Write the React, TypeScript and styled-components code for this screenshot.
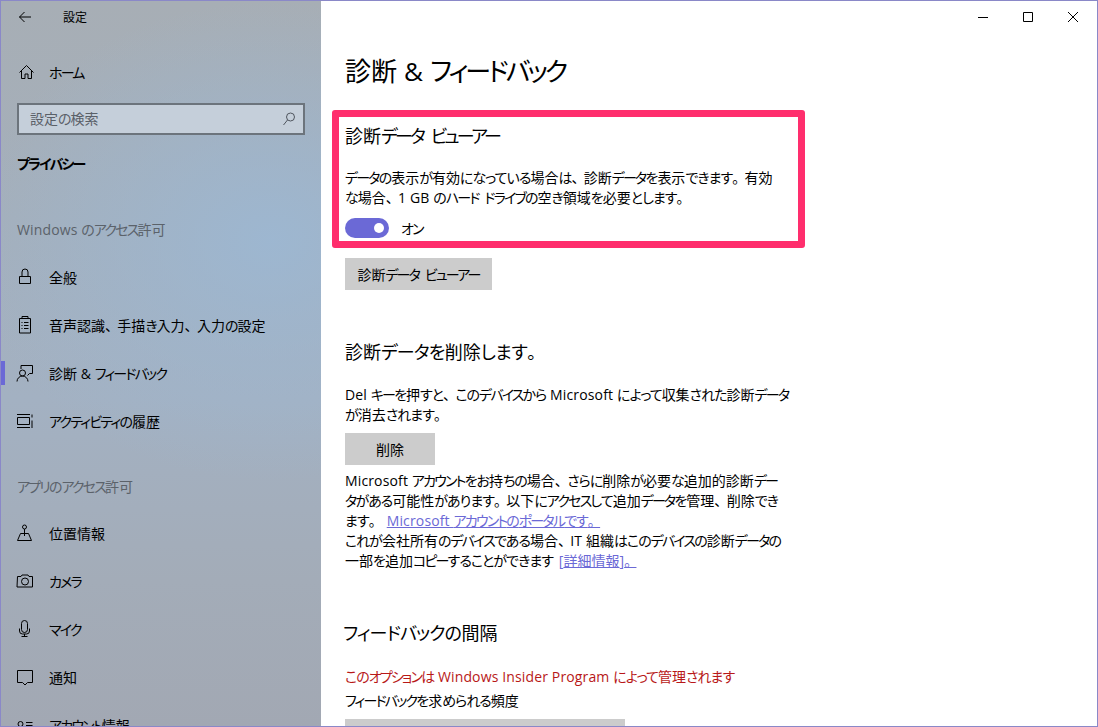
import React from 'react';
import styled, { createGlobalStyle } from 'styled-components';

const accent = '#6b69d6';

const GlobalStyle = createGlobalStyle`
    html, body {
        margin: 0;
        padding: 0;
        background: #fff;
    }
    body {
        font-family: 'Open Sans', 'Noto Sans CJK JP', sans-serif;
        font-feature-settings: 'palt';
        color: #000;
    }
`;

type RunKind = 'hira' | 'kata' | 'punct' | 'kanji' | 'gap' | 'latin';

const kindOf = (run: string): RunKind => {
    if (run === ' ') return 'gap';
    if (/^[ぁ-ん]/.test(run)) return 'hira';
    if (/^[ァ-ヶー]/.test(run)) return 'kata';
    if (/^[、。]/.test(run)) return 'punct';
    if (/^[\u4e00-\u9fff]/.test(run)) return 'kanji';
    return 'latin';
};

const Jp: React.FC<{ text: string }> = ({ text }) => (
    <>
        {(text.match(/[ぁ-ん]+|[ァ-ヶー]+|[、。]+|[\u4e00-\u9fff]+|[^ぁ-んァ-ヶー、。\u4e00-\u9fff]+/g) ?? []).map((run, i) => (
            <Run key={i} $kind={kindOf(run)}>
                {run}
            </Run>
        ))}
    </>
);

const Icon: React.FC<{ children: React.ReactNode }> = ({ children }) => (
    <svg width="22" height="22" viewBox="0 0 22 22" fill="none" stroke="#000" strokeWidth="1">
        {children}
    </svg>
);

const navIcons: Record<string, React.ReactNode> = {
    home: <path d="M5.500 11.500 12.500 4.500l7 7M7.500 9.500v8h3.500V13h3v4.500h3.500v-8" />,
    lock: <path d="M5.500 10.500h11v7h-11zM8 10.500V6a3 3 0 0 1 6 0v4.500" />,
    speech: (
        <path d="M5.500 4.500h11v14.500h-11zM8 4.500v-2h6v2M7.500 8.500h1M7.500 11.500h1M7.500 14.500h1M10 8.500h4.500M10 11.500h4.500M10 14.500h4.500" />
    ),
    feedback: (
        <>
            <circle cx="8.500" cy="11" r="3" />
            <path d="M3 19.500c0-3 2.500-5.500 5.500-5.500s5.500 2.500 5.500 5.500M7 7V3.500h11.500v8h-3l-2 2" />
        </>
    ),
    activity: <path d="M3 4.500h13M3 17.500h13M3.500 7.500h12v7h-12zM18 10.500v7.500M18 4.500v3" />,
    location: (
        <>
            <circle cx="10.500" cy="5" r="2" />
            <path d="M10.500 7v7M6.500 11.500h8l3 7h-14z" />
        </>
    ),
    camera: (
        <>
            <path d="M3.500 6.500h3.500l1-1.500h6l1 1.500h3.500v10.500h-15.500z" />
            <circle cx="11" cy="11.500" r="3.500" />
        </>
    ),
    mic: (
        <>
            <rect x="7.500" y="2.500" width="6" height="12" rx="3" />
            <path d="M5.500 10.500v2.500a3 3 0 0 0 3 3h4a3 3 0 0 0 3-3v-2.500M10.500 16v2.500M7.500 18.500h6" />
        </>
    ),
    notice: <path d="M3.500 4.500h15v12h-5l-2.500 2.500-2.500-2.500h-5z" />,
    account: (
        <>
            <circle cx="6.500" cy="10" r="2.500" />
            <path d="M2.500 18c0-3 2-4.500 4-4.500s4 1.500 4 4.500M12 8.500h6.500M12 11.500h6.500" />
        </>
    ),
};

const NavItem: React.FC<{ icon: string; label: string; active?: boolean }> = ({ icon, label, active }) => (
    <Item $active={active}>
        <IconSlot>
            <Icon>{navIcons[icon]}</Icon>
        </IconSlot>
        <span>
            <Jp text={label} />
        </span>
    </Item>
);

export default function App() {
    return (
        <>
            <GlobalStyle />
            <Window>
                <Sidebar>
                    <BackRow>
                        <svg width="16" height="16" viewBox="0 0 16 16" fill="none" stroke="#000" strokeWidth="1">
                            <path d="M1.500 8h11.500M6.500 3 1.500 8l5 5" />
                        </svg>
                        <span>設定</span>
                    </BackRow>
                    <HomeSlot>
                        <NavItem icon="home" label="ホーム" />
                    </HomeSlot>
                    <SearchBox>
                        <span>
                            <Jp text="設定の検索" />
                        </span>
                        <svg width="16" height="16" viewBox="0 0 16 16" fill="none" stroke="#50565e" strokeWidth="1">
                            <circle cx="10.500" cy="7" r="4" />
                            <path d="M7.500 10 3.500 15" />
                        </svg>
                    </SearchBox>
                    <SectionName>
                        <Jp text="プライバシー" />
                    </SectionName>
                    <GroupLabel $top={44} $bottom={12}>
                        <Jp text="Windows のアクセス許可" />
                    </GroupLabel>
                    <NavItem icon="lock" label="全般" />
                    <NavItem icon="speech" label="音声認識、手描き入力、入力の設定" />
                    <NavItem icon="feedback" label="診断 & フィードバック" active />
                    <NavItem icon="activity" label="アクティビティの履歴" />
                    <GroupLabel $top={31} $bottom={11}>
                        <Jp text="アプリのアクセス許可" />
                    </GroupLabel>
                    <NavItem icon="location" label="位置情報" />
                    <NavItem icon="camera" label="カメラ" />
                    <NavItem icon="mic" label="マイク" />
                    <NavItem icon="notice" label="通知" />
                    <NavItem icon="account" label="アカウント情報" />
                </Sidebar>
                <Main>
                    <TitleBar>
                        <WindowButton>
                            <svg width="12" height="12" viewBox="0 0 12 12" stroke="#000" fill="none">
                                <path d="M1 6.500h10" />
                            </svg>
                        </WindowButton>
                        <WindowButton>
                            <svg width="12" height="12" viewBox="0 0 12 12" stroke="#000" fill="none">
                                <path d="M1.500 1.500h9v9h-9z" />
                            </svg>
                        </WindowButton>
                        <WindowButton>
                            <svg width="12" height="12" viewBox="0 0 12 12" stroke="#000" fill="none">
                                <path d="M1 1l10 10M11 1 1 11" />
                            </svg>
                        </WindowButton>
                    </TitleBar>
                    <Content>
                        <PageTitle>
                            <Jp text="診断 & フィードバック" />
                        </PageTitle>
                        <Highlight>
                            <SubTitle $tight>
                                <Jp text="診断データ ビューアー" />
                            </SubTitle>
                            <Body $top={19}>
                                <Jp text="データの表示が有効になっている場合は、診断データを表示できます。有効" />
                                <br />
                                <Jp text="な場合、1 GB のハード ドライブの空き領域を必要とします。" />
                            </Body>
                            <ToggleRow>
                                <Toggle />
                                <span>
                                    <Jp text="オン" />
                                </span>
                            </ToggleRow>
                        </Highlight>
                        <GrayButton $width={147} $top={10}>
                            <span>
                                <Jp text="診断データ ビューアー" />
                            </span>
                        </GrayButton>
                        <SubTitle $top={49}>
                            <Jp text="診断データを削除します。" />
                        </SubTitle>
                        <Body $top={20}>
                            <Jp text="Del キーを押すと、このデバイスから Microsoft によって収集された診断データ" />
                            <br />
                            <Jp text="が消去されます。" />
                        </Body>
                        <GrayButton $width={90} $top={8}>
                            <span>
                                <Jp text="削除" />
                            </span>
                        </GrayButton>
                        <Body $top={6}>
                            <Jp text="Microsoft アカウントをお持ちの場合、さらに削除が必要な追加的診断デー" />
                            <br />
                            <Jp text="タがある可能性があります。以下にアクセスして追加データを管理、削除でき" />
                            <br />
                            <Jp text="ます。 " />
                            <TextLink>
                                <Jp text="Microsoft アカウントのポータルです。" />
                            </TextLink>
                            <br />
                            <Jp text="これが会社所有のデバイスである場合、IT 組織はこのデバイスの診断データの" />
                            <br />
                            <Jp text="一部を追加コピーすることができます " />
                            <TextLink>
                                <Jp text="[詳細情報]。" />
                            </TextLink>
                        </Body>
                        <SubTitle $top={49} $shift={-2}>
                            <Jp text="フィードバックの間隔" />
                        </SubTitle>
                        <Body $top={21} $color="#b81818">
                            <Jp text="このオプションは Windows Insider Program によって管理されます" />
                        </Body>
                        <Body $top={4}>
                            <Jp text="フィードバックを求められる頻度" />
                        </Body>
                        <SelectBar />
                    </Content>
                </Main>
            </Window>
        </>
    );
}

const tracking: Record<RunKind, string> = {
    hira: 'var(--hira, -0.07em)',
    kata: 'var(--kata, -0.13em)',
    punct: '-0.12em',
    kanji: '0',
    gap: '0.15em',
    latin: '0.01em',
};

const Run = styled.span<{ $kind: RunKind }>`
    letter-spacing: ${({ $kind }) => tracking[$kind]};
    font-feature-settings: ${({ $kind }) => ($kind === 'punct' ? 'normal' : "'palt'")};
`;

const Window = styled.div`
    display: flex;
    box-sizing: border-box;
    width: 1098px;
    height: 727px;
    overflow: hidden;
    border: 1px solid #8a88c8;
    background: #fff;
`;

const Sidebar = styled.aside`
    flex: 0 0 320px;
    display: flex;
    flex-direction: column;
    height: 725px;
    overflow: hidden;
    background:
        radial-gradient(ellipse 300px 240px at 270px 240px, rgba(156, 184, 212, 0.85), rgba(156, 184, 212, 0) 100%),
        linear-gradient(180deg, #a7aeb5 0%, #a4afbb 30%, #a3b1c2 55%, #a3acb8 80%, #a2a8b3 100%);
`;

const BackRow = styled.div`
    display: flex;
    align-items: center;
    flex: none;
    height: 32px;
    padding-left: 17px;
    font-size: 12px;

    span {
        margin-left: 29px;
    }
`;

const HomeSlot = styled.div`
    flex: none;
    margin-top: 15px;
`;

const Item = styled.div<{ $active?: boolean }>`
    position: relative;
    display: flex;
    align-items: center;
    flex: none;
    height: 48px;
    font-size: 14px;

    &::before {
        content: '';
        display: ${({ $active }) => ($active ? 'block' : 'none')};
        position: absolute;
        left: 0;
        top: 12px;
        width: 4px;
        height: 24px;
        background: ${accent};
    }
`;

const IconSlot = styled.span`
    display: flex;
    align-items: center;
    justify-content: center;
    width: 48px;
    height: 22px;
`;

const SearchBox = styled.div`
    display: flex;
    align-items: center;
    justify-content: space-between;
    box-sizing: border-box;
    flex: none;
    width: 288px;
    height: 32px;
    margin: 7px 0 0 16px;
    padding: 0 7px 2px 11px;
    border: 2px solid #6c747c;
    background: #c5cfda;
    color: #5a6068;
    font-size: 14px;
`;

const SectionName = styled.div`
    flex: none;
    margin: 18px 0 0 16px;
    line-height: 22px;
    font-size: 14px;
    font-weight: 700;
`;

const GroupLabel = styled.div<{ $top: number; $bottom: number }>`
    flex: none;
    margin: ${({ $top }) => $top}px 0 ${({ $bottom }) => $bottom}px 16px;
    line-height: 22px;
    font-size: 14px;
    color: #5b626a;
`;

const Main = styled.main`
    flex: 1;
    min-width: 0;
`;

const TitleBar = styled.div`
    display: flex;
    justify-content: flex-end;
    height: 32px;
    padding-right: 2px;
`;

const WindowButton = styled.div`
    display: flex;
    align-items: center;
    justify-content: center;
    width: 45px;
    height: 32px;
`;

const Content = styled.div`
    padding-left: 24px;
`;

const PageTitle = styled.h1`
    --kata: -0.115em;
    margin: 18px 0 0;
    line-height: 40px;
    font-size: 26px;
    font-weight: 400;
`;

const Highlight = styled.section`
    box-sizing: border-box;
    width: 473px;
    height: 138px;
    margin: 19px 0 0 -13px;
    padding: 6px 6px 0;
    border: 7px solid #ff2e6d;
    border-radius: 3px;
`;

const SubTitle = styled.h2<{ $top?: number; $shift?: number; $tight?: boolean }>`
    --kata: ${({ $tight }) => ($tight ? '-0.15em' : '-0.05em')};
    --hira: -0.03em;
    margin: ${({ $top }) => $top ?? 0}px 0 0 ${({ $shift }) => $shift ?? 0}px;
    line-height: 26px;
    font-size: 18px;
    font-weight: 400;
`;

const Body = styled.p<{ $top?: number; $color?: string }>`
    margin: ${({ $top }) => $top ?? 0}px 0 0;
    line-height: 20px;
    font-size: 14px;
    color: ${({ $color }) => $color ?? '#000'};
    white-space: pre-wrap;
`;

const TextLink = styled.span`
    color: ${accent};
    text-decoration: underline;
`;

const ToggleRow = styled.div`
    display: flex;
    align-items: center;
    gap: 12px;
    margin-top: 10px;
    font-size: 14px;
`;

const Toggle = styled.span`
    display: flex;
    align-items: center;
    justify-content: flex-end;
    box-sizing: border-box;
    width: 44px;
    height: 20px;
    padding-right: 5px;
    border-radius: 10px;
    background: ${accent};

    &::after {
        content: '';
        width: 10px;
        height: 10px;
        border-radius: 50%;
        background: #fff;
    }
`;

const GrayButton = styled.div<{ $width: number; $top: number }>`
    display: flex;
    align-items: center;
    justify-content: center;
    width: ${({ $width }) => $width}px;
    height: 32px;
    margin-top: ${({ $top }) => $top}px;
    background: #ccc;
    font-size: 14px;
`;

const SelectBar = styled.div`
    width: 280px;
    height: 32px;
    margin-top: 8px;
    background: #ccc;
`;
